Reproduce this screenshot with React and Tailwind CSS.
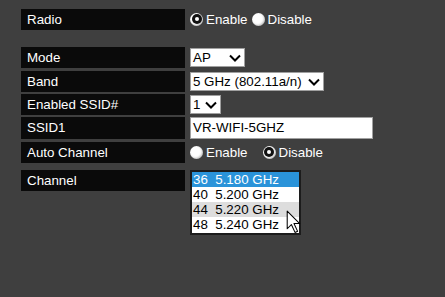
import React from 'react';

const Label = ({ children, h = 'h-[21px]' }) => (
  <div className={`w-[164px] ${h} bg-[#0a0a0a] text-white flex items-center pl-[6px] shrink-0`}>{children}</div>
);

const Chevron = () => (
  <svg width="12" height="8" viewBox="0 0 12 8" className="shrink-0">
    <path d="M1 1.5 L6 6.5 L11 1.5" fill="none" stroke="#000" strokeWidth="2" />
  </svg>
);

const FakeSelect = ({ value, width }) => (
  <div className={`${width} h-[19px] bg-white border border-[#a0a0a0] flex items-center justify-between pl-[2px] pr-[3px] text-black`}>
    <span>{value}</span>
    <Chevron />
  </div>
);

const Radio = ({ checked }) => (
  <span className="w-[13px] h-[13px] rounded-full bg-white flex items-center justify-center shrink-0 shadow-[inset_-1px_-1px_2px_rgba(0,0,0,0.25)]">
    {checked && (
      <span className="w-[10px] h-[10px] rounded-full bg-[#111] flex items-center justify-center">
        <span className="w-[4px] h-[4px] rounded-full bg-white" />
      </span>
    )}
  </span>
);

const channels = [
  ['36', '5.180'],
  ['40', '5.200'],
  ['44', '5.220'],
  ['48', '5.240'],
];

export default function App() {
  return (
    <div
      className="w-[445px] h-[297px] bg-[#3f3f3f] text-[13.33px] leading-none pl-[21px] pt-[9px]"
      style={{ fontFamily: '"Liberation Sans", Arial, sans-serif' }}
    >
      {/* Radio */}
      <div className="flex items-center gap-[5px]">
        <Label>Radio</Label>
        <div className="flex items-center text-white">
          <Radio checked />
          <span className="ml-[3px]">Enable</span>
          <span className="ml-[4px]"><Radio /></span>
          <span className="ml-[3px]">Disable</span>
        </div>
      </div>

      <div className="mt-[17px] flex flex-col gap-[2px]">
        <div className="flex items-center gap-[5px]">
          <Label>Mode</Label>
          <FakeSelect value="AP" width="w-[55px]" />
        </div>
        <div className="flex items-center gap-[5px] mt-[1px]">
          <Label>Band</Label>
          <FakeSelect value="5 GHz (802.11a/n)" width="w-[134px]" />
        </div>
        <div className="flex items-center gap-[5px]">
          <Label>Enabled SSID#</Label>
          <FakeSelect value="1" width="w-[31px]" />
        </div>
        <div className="flex items-center gap-[5px]">
          <Label h="h-[22px]">SSID1</Label>
          <div className="w-[183px] h-[22px] bg-white border border-[#a0a0a0] flex items-center pl-[2px] text-black">
            VR-WIFI-5GHZ
          </div>
        </div>
        <div className="flex items-center gap-[5px] mt-[1px]">
          <Label h="h-[21px]">Auto Channel</Label>
          <div className="flex items-center text-white">
            <Radio />
            <span className="ml-[3px]">Enable</span>
            <span className="ml-[15px]"><Radio checked /></span>
            <span className="ml-[3px]">Disable</span>
          </div>
        </div>
        <div className="flex items-start gap-[5px] mt-[5px]">
          <Label>Channel</Label>
          <div className="relative w-[111px] border-2 border-[#1c1c1c] bg-white pb-[1px]">
            {channels.map(([ch, f], i) => (
              <div
                key={ch}
                className={`h-[15px] flex items-center pl-[1px] whitespace-pre ${
                  i === 0 ? 'bg-[#2a93d9] text-white' : i === 2 ? 'bg-[#dddddd] text-black' : 'text-black'
                }`}
              >
                {`${ch}  ${f} GHz`}
              </div>
            ))}
            <svg
              width="17"
              height="25"
              viewBox="0 0 16 24"
              className="absolute left-[94px] top-[38px]"
            >
              <path
                d="M1 1 L1 18 L5 14 L8.5 21.5 L11 20.5 L7.5 13 L13 13 Z"
                fill="#fff"
                stroke="#000"
                strokeWidth="1"
                strokeLinejoin="round"
              />
            </svg>
          </div>
        </div>
      </div>
    </div>
  );
}
